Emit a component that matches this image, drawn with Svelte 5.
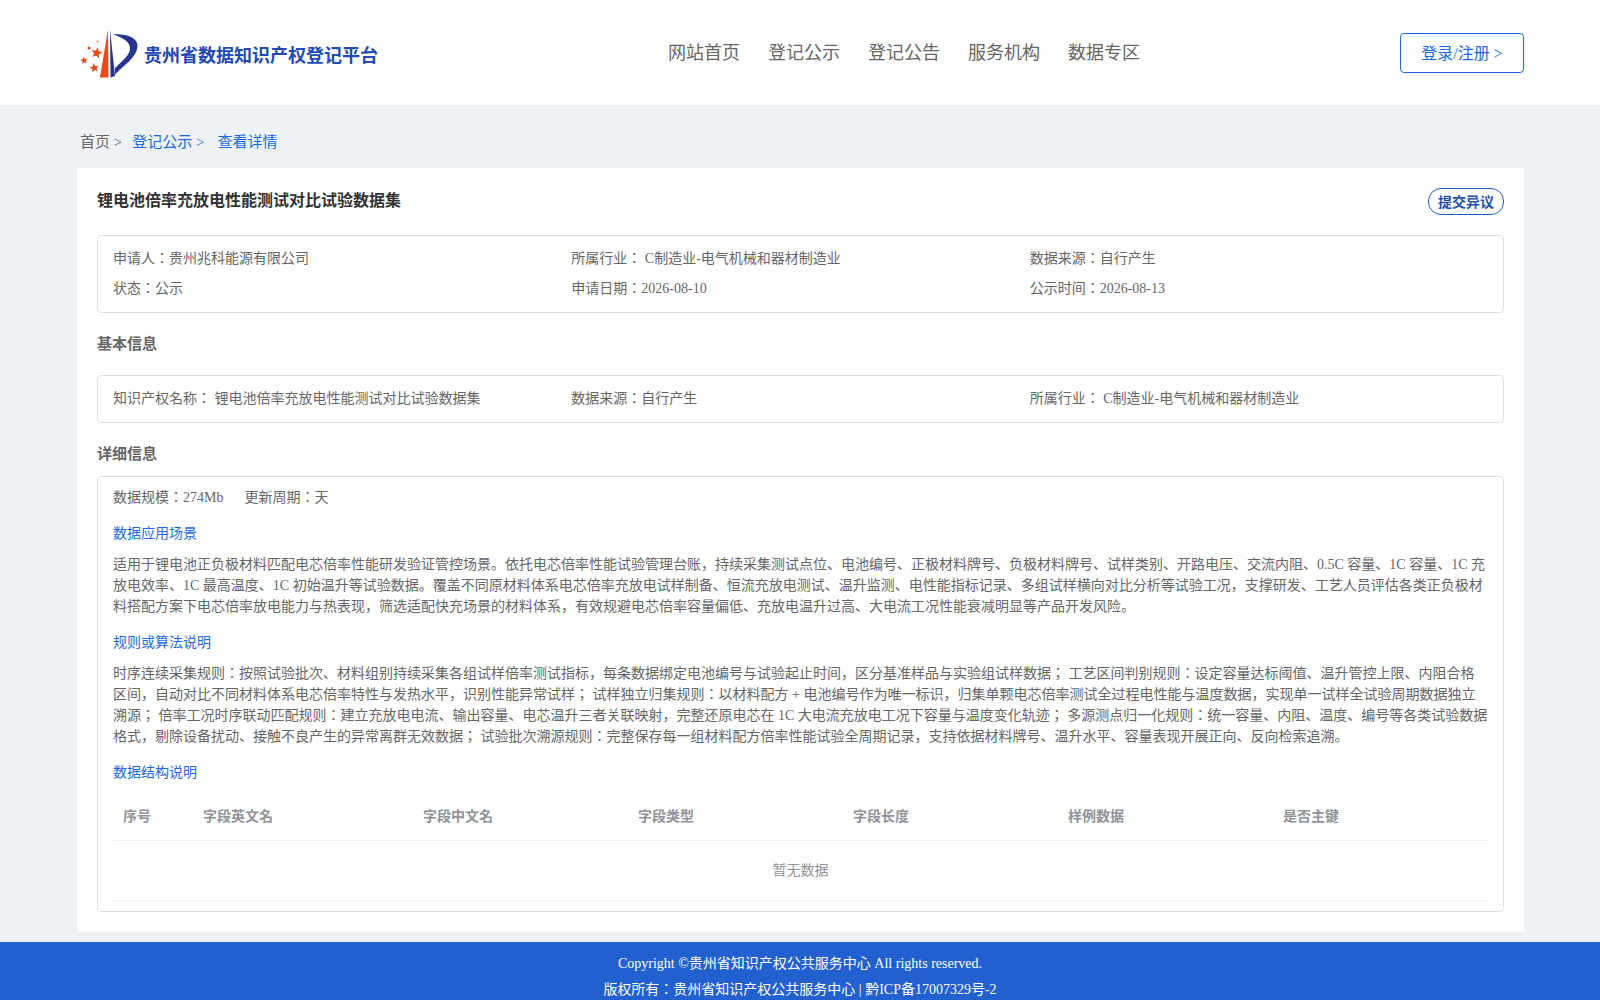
<script lang="ts">
  const nav = ['网站首页', '登记公示', '登记公告', '服务机构', '数据专区']
  const columns = ['序号', '字段英文名', '字段中文名', '字段类型', '字段长度', '样例数据', '是否主键']
  const summary = [
    '申请人：贵州兆科能源有限公司',
    '所属行业： C制造业-电气机械和器材制造业',
    '数据来源：自行产生',
    '状态：公示',
    '申请日期：2026-08-10',
    '公示时间：2026-08-13'
  ]
  const basic = [
    '知识产权名称： 锂电池倍率充放电性能测试对比试验数据集',
    '数据来源：自行产生',
    '所属行业： C制造业-电气机械和器材制造业'
  ]

  // five point star for the logo
  function star(cx: number, cy: number, r: number, turn = 12) {
    const pts: string[] = []
    for (let i = 0; i < 10; i++) {
      const radius = i % 2 === 0 ? r : r * 0.42
      const angle = ((-90 + turn + i * 36) * Math.PI) / 180
      pts.push(`${(cx + radius * Math.cos(angle)).toFixed(2)},${(cy + radius * Math.sin(angle)).toFixed(2)}`)
    }
    return pts.join(' ')
  }
</script>

<header class="top">
  <div class="brand">
    <svg class="logo" viewBox="0 0 60 52" aria-hidden="true">
      <path d="M28 2.500 L28.500 50.500 L20 50.500 Z" fill="#e8481a" />
      <path d="M30 2.500 L30.500 50.500 L35 49 Z" fill="#27348f" />
      <path d="M33 7.500 C46 6.500 58 10.500 57.500 19.500 C57 30 44 38 35 47.500 L35 41 C42 34 50.500 28 50 21 C49.500 15 44 11 33 7.500 Z" fill="#27348f" />
      <polygon points={star(16.7, 26, 6)} fill="#e8481a" />
      <polygon points={star(14.3, 41, 5, -10)} fill="#e8481a" />
      <polygon points={star(4, 33.500, 4, -10)} fill="#e8481a" />
      <circle cx="9" cy="21" r="1.500" fill="#e8481a" />
      <circle cx="17.700" cy="14.500" r="1" fill="#e8836a" />
    </svg>
    <span class="brand-name">贵州省数据知识产权登记平台</span>
  </div>
  <nav class="nav">
    {#each nav as item}
      <a href="#top">{item}</a>
    {/each}
  </nav>
  <button type="button" class="login">登录/注册 &gt;</button>
</header>

<main class="page">
  <div class="crumbs">
    <span class="crumb-home">首页 &gt;</span>
    <a href="#top">登记公示 &gt;</a>
    <a href="#top">查看详情</a>
  </div>

  <section class="card">
    <div class="title-row">
      <h1>锂电池倍率充放电性能测试对比试验数据集</h1>
      <button type="button" class="objection">提交异议</button>
    </div>

    <div class="box summary">
      {#each summary as item}
        <div>{item}</div>
      {/each}
    </div>

    <h2 class="basic-title">基本信息</h2>
    <div class="box basic">
      {#each basic as item}
        <div>{item}</div>
      {/each}
    </div>

    <h2 class="detail-title">详细信息</h2>
    <div class="box detail">
      <div class="scale"><span>数据规模：274Mb</span><span>更新周期：天</span></div>

      <h3>数据应用场景</h3>
      <p>适用于锂电池正负极材料匹配电芯倍率性能研发验证管控场景。依托电芯倍率性能试验管理台账，持续采集测试点位、电池编号、正极材料牌号、负极材料牌号、试样类别、开路电压、交流内阻、0.5C 容量、1C 容量、1C 充放电效率、1C 最高温度、1C 初始温升等试验数据。覆盖不同原材料体系电芯倍率充放电试样制备、恒流充放电测试、温升监测、电性能指标记录、多组试样横向对比分析等试验工况，支撑研发、工艺人员评估各类正负极材料搭配方案下电芯倍率放电能力与热表现，筛选适配快充场景的材料体系，有效规避电芯倍率容量偏低、充放电温升过高、大电流工况性能衰减明显等产品开发风险。</p>

      <h3>规则或算法说明</h3>
      <p>时序连续采集规则：按照试验批次、材料组别持续采集各组试样倍率测试指标，每条数据绑定电池编号与试验起止时间，区分基准样品与实验组试样数据； 工艺区间判别规则：设定容量达标阈值、温升管控上限、内阻合格区间，自动对比不同材料体系电芯倍率特性与发热水平，识别性能异常试样； 试样独立归集规则：以材料配方 + 电池编号作为唯一标识，归集单颗电芯倍率测试全过程电性能与温度数据，实现单一试样全试验周期数据独立溯源； 倍率工况时序联动匹配规则：建立充放电电流、输出容量、电芯温升三者关联映射，完整还原电芯在 1C 大电流充放电工况下容量与温度变化轨迹； 多源测点归一化规则：统一容量、内阻、温度、编号等各类试验数据格式，剔除设备扰动、接触不良产生的异常离群无效数据； 试验批次溯源规则：完整保存每一组材料配方倍率性能试验全周期记录，支持依据材料牌号、温升水平、容量表现开展正向、反向检索追溯。</p>

      <h3>数据结构说明</h3>
      <table>
        <thead>
          <tr>
            {#each columns as col}
              <th>{col}</th>
            {/each}
          </tr>
        </thead>
        <tbody>
          <tr>
            <td colspan={columns.length}>暂无数据</td>
          </tr>
        </tbody>
      </table>
    </div>
  </section>
</main>

<footer class="foot">
  <div>Copyright ©贵州省知识产权公共服务中心 All rights reserved.</div>
  <div>版权所有：贵州省知识产权公共服务中心 | 黔ICP备17007329号-2</div>
</footer>

<style>
  :global(body) {
    background: #eff2f5;
    font-family: 'Liberation Serif', 'Noto Sans CJK JP', serif;
    color: #666;
  }

  h1,
  h2,
  h3,
  p {
    margin: 0;
  }

  a {
    color: inherit;
    text-decoration: none;
  }

  button {
    font-family: inherit;
    background: #fff;
    cursor: pointer;
  }

  .top {
    display: flex;
    align-items: center;
    height: 105px;
    padding: 0 76px 0 80px;
    background: #fff;
  }

  .brand {
    display: flex;
    align-items: center;
    gap: 4px;
    width: 588px;
  }

  .logo {
    width: 60px;
    height: 52px;
  }

  .brand-name {
    margin-top: 2px;
    color: #2349b4;
    font-size: 18px;
    font-weight: 700;
  }

  .nav {
    display: flex;
    gap: 28px;
    margin-bottom: 3px;
    font-size: 18px;
    color: #666;
  }

  .login {
    margin-left: auto;
    width: 124px;
    height: 40px;
    padding: 0 0 2px;
    border: 1px solid #1a6ae0;
    border-radius: 4px;
    color: #1a6ae0;
    font-size: 16px;
  }

  .page {
    width: 1447px;
    margin: 0 0 0 77px;
    padding: 0 0 10px;
  }

  .crumbs {
    display: flex;
    align-items: center;
    gap: 10px;
    height: 55px;
    padding: 8px 0 0 3px;
    font-size: 15px;
    color: #1a6ae0;
  }

  .crumb-home {
    color: #666;
  }

  .crumbs a:last-child {
    margin-left: 3px;
  }

  .card {
    padding: 20px;
    background: #fff;
  }

  .title-row {
    display: flex;
    align-items: center;
    justify-content: space-between;
    height: 27px;
  }

  h1 {
    margin-top: -5px;
    font-size: 16px;
    font-weight: 700;
    color: #333;
  }

  .objection {
    width: 76px;
    height: 27px;
    padding: 0 0 2px;
    border: 1px solid #1a5fc8;
    border-radius: 13px;
    color: #1f4fb0;
    font-size: 14px;
    font-weight: 700;
  }

  .box {
    border: 1px solid #dcdfe6;
    border-radius: 4px;
    font-size: 14px;
    line-height: 30px;
  }

  .summary,
  .basic {
    display: grid;
    grid-template-columns: repeat(3, 1fr);
    padding: 8px 15px;
  }

  .summary {
    margin-top: 20px;
  }

  h2 {
    font-size: 15px;
    font-weight: 700;
    color: #666;
    line-height: 20px;
  }

  .basic-title {
    margin: 21px 0;
  }

  .detail-title {
    margin: 21px 0 12px;
  }

  .detail {
    padding: 6px 15px 10px;
  }

  .scale {
    display: flex;
    gap: 21px;
    line-height: 30px;
  }

  h3 {
    margin-top: 6px;
    font-size: 14px;
    font-weight: 400;
    color: #1a6ae0;
    line-height: 30px;
  }

  p {
    margin-top: 5px;
    line-height: 21px;
  }

  p + h3 {
    margin-top: 11px;
  }

  table {
    width: 100%;
    margin-top: 5px;
    border-collapse: collapse;
    table-layout: fixed;
  }

  th {
    height: 47px;
    padding: 0 10px;
    border-bottom: 1px solid #ebeef5;
    color: #909399;
    font-size: 14px;
    font-weight: 700;
    text-align: left;
  }

  th:first-child {
    width: 60px;
  }

  th:nth-child(2) {
    width: 200px;
  }

  td {
    height: 57px;
    border-bottom: 1px solid #ebeef5;
    color: #909399;
    text-align: center;
  }

  .foot {
    height: 58px;
    padding-top: 9px;
    box-sizing: border-box;
    background: #2260cf;
    color: #fff;
    font-size: 14px;
    line-height: 26px;
    text-align: center;
    overflow: hidden;
  }
</style>
